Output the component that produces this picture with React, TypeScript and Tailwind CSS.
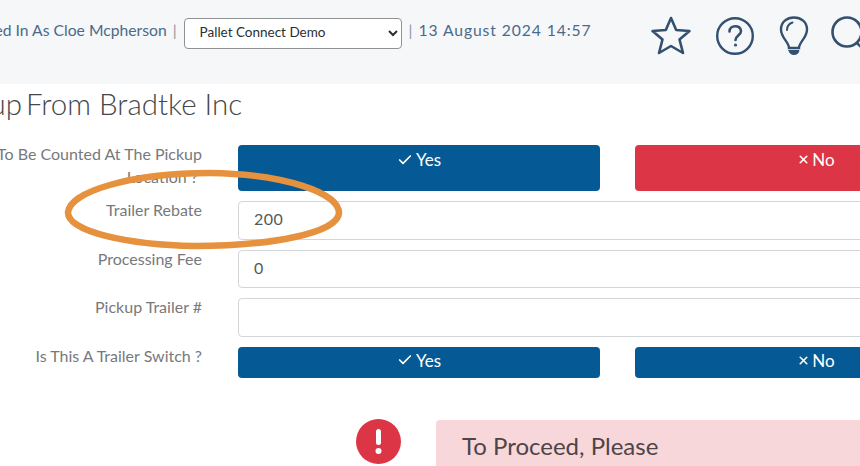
import { Check, X } from 'lucide-react';

const labelClass = 'w-[202px] shrink-0 flex flex-col items-end text-[16px] leading-[23px] text-[#77797c] whitespace-nowrap';

function ToggleRow({ label, height, noColor }: { label: React.ReactNode; height: string; noColor: string }) {
  return (
    <div className="flex">
      <div className={`${labelClass} -mt-[3px]`}>{label}</div>
      <div className="ml-9 flex gap-[35px]">
        <button className={`${height} w-[362px] rounded-[4px] bg-[#055a96] text-white text-[17px] leading-[23px] flex justify-center items-start`}>
          <span className="flex items-center gap-[3px]"><Check size={16} strokeWidth={2.5} />Yes</span>
        </button>
        <button className={`${height} w-[362px] rounded-[4px] ${noColor} text-white text-[17px] leading-[23px] flex justify-center items-start`}>
          <span className="flex items-center gap-[2px]"><X size={13} strokeWidth={3} />No</span>
        </button>
      </div>
    </div>
  );
}

function InputRow({ label, value }: { label: string; value: string }) {
  return (
    <div className="flex">
      <div className={`${labelClass} -mt-[3px]`}>{label}</div>
      <div className="ml-9 h-[38.5px] w-[759px] shrink-0 rounded-[4px] border border-[#d3d6d9] bg-white pl-[15px] pb-[2px] flex items-center text-[16px] tracking-[0.5px] text-[#55595c]">
        {value}
      </div>
    </div>
  );
}

export default function App() {
  return (
    <div className="relative h-[466px] w-[860px] overflow-hidden bg-white font-['Lato','Open_Sans',sans-serif]">
      <header className="flex h-[84px] bg-[#f6f7f8] text-[#4a6a8a]">
        <div className="flex h-[62px] items-center text-[15.7px] -ml-[38px] whitespace-nowrap">
          <span>Logged In As Cloe Mcpherson</span>
          <span className="ml-[6px] text-[#8a97a5]">|</span>
          <select className="ml-[7px] mt-[5px] h-[31px] w-[218px] rounded-[4px] border border-[#8f9295] bg-white pl-[11px] pb-[3px] text-[13.5px] text-[#2b2f33]">
            <option>Pallet Connect Demo</option>
          </select>
          <span className="ml-[7px] text-[#8a97a5]">|</span>
          <span className="ml-[6px] tracking-[0.9px]">13 August 2024 14:57</span>
        </div>
        <div className="absolute left-[650px] top-[15px] flex text-[#33506f]">
          <svg width="42" height="41" viewBox="0 0 42 41" fill="none" stroke="currentColor" strokeWidth="2.6" strokeLinejoin="round">
            <path d="M21 3 L26.2 15 L39.5 16 L29.5 24.5 L33 38 L21 31 L9 38 L12.5 24.5 L2.5 16 L15.8 15 Z" />
          </svg>
          <svg className="ml-[23px]" width="40" height="41" viewBox="0 0 40 41" fill="none" stroke="currentColor" strokeWidth="2.4" strokeLinecap="round">
            <circle cx="20" cy="21" r="17.8" />
            <path d="M14.5 16.5 C14.5 9.5 26 9.5 26 16 C26 20.5 20.5 20.5 20.5 25" strokeWidth="2.6" />
            <circle cx="20.5" cy="30" r="0.7" strokeWidth="1.8" />
          </svg>
          <svg className="ml-[24px]" width="30" height="41" viewBox="0 0 30 41" fill="none" stroke="currentColor" strokeWidth="2.4" strokeLinecap="round">
            <path d="M10 33 C10 27 2 23 2 14.5 C2 7 8 2.5 15 2.5 C22 2.5 28 7 28 14.5 C28 23 20 27 20 33 Z" />
            <path d="M8 15 C8 11 10.5 8.5 13.5 7.5" strokeWidth="2" />
            <path d="M10 35.5 H20 C19.5 38.5 17.5 39.5 15 39.5 C12.5 39.5 10.5 38.5 10 35.5 Z" fill="currentColor" strokeWidth="1" />
          </svg>
          <svg className="ml-[21px]" width="50" height="41" viewBox="0 0 50 41" fill="none" stroke="currentColor" strokeWidth="2.6">
            <circle cx="17" cy="17" r="14.5" />
            <path d="M27 28 L36 37" />
          </svg>
        </div>
      </header>

      <h1 className="-ml-[62px] h-[61px] whitespace-nowrap text-[29.5px] font-light leading-[39px] text-[#44474a]">
        <span className="-mr-[4px]">Pickup</span> From Bradtke Inc
      </h1>

      <div className="flex flex-col gap-[10px]">
        <ToggleRow
          label={<><span>To Be Counted At The Pickup</span><span className="mr-1">Location ?</span></>}
          height="h-[46px] pt-[3px]"
          noColor="bg-[#dc3545]"
        />
        <InputRow label="Trailer Rebate" value="200" />
        <InputRow label="Processing Fee" value="0" />
        <InputRow label="Pickup Trailer #" value="" />
        <ToggleRow label="Is This A Trailer Switch ?" height="h-[31.5px] pt-[2px]" noColor="bg-[#055a96]" />
      </div>

      <div className="ml-[356px] mt-[42px] flex gap-[35px]">
        <svg className="mt-[-1px] shrink-0" width="45" height="45" viewBox="0 0 45 45">
          <circle cx="22.5" cy="22.5" r="22.5" fill="#dc3545" />
          <rect x="20" y="10" width="5" height="16" rx="2.5" fill="white" />
          <circle cx="22.5" cy="32" r="3" fill="white" />
        </svg>
        <div className="h-[80px] w-[500px] shrink-0 rounded-[4px] bg-[#f8d7da] pl-[26px] pt-[10px] text-[24px] leading-[32px] text-[#4d4448]">
          To Proceed, Please
        </div>
      </div>

      {/* annotation oval drawn over the form */}
      <svg className="absolute left-[60px] top-[165px]" width="290" height="90" viewBox="0 0 290 90" fill="none">
        <path
          d="M8 47 C10 27 70 8 150 8 C225 9 279 28 279 48 C278 68 210 81 135 81 C70 80 7 67 8 47 Z"
          stroke="#e6913d"
          strokeWidth="6.5"
        />
      </svg>
    </div>
  );
}
